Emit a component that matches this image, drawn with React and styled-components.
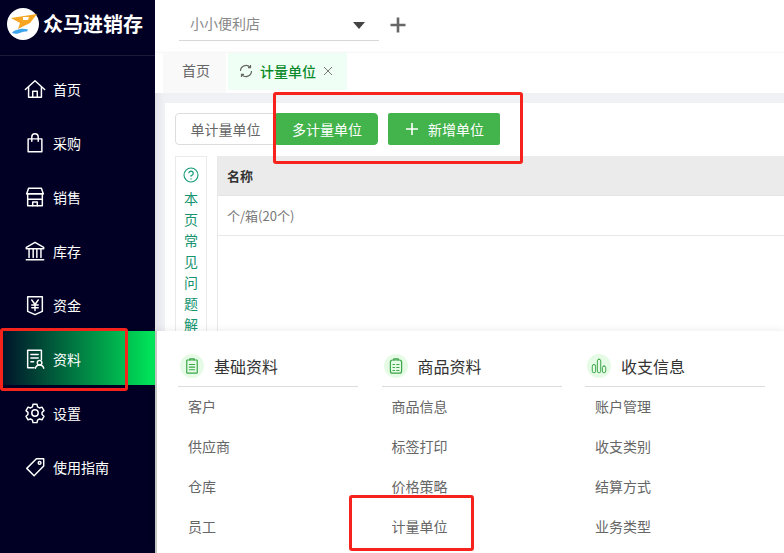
import styled, { createGlobalStyle } from 'styled-components'

const GlobalStyle = createGlobalStyle`
  html, body { margin: 0; padding: 0; height: 100%; overflow: hidden; }
  #root { height: 100%; }
  body { font-family: "Noto Sans CJK SC", "Liberation Sans", sans-serif; background: #fff; }
  * { box-sizing: border-box; }
`

const Line = ({ children, size = 24, sw = 1.6 }) => (
  <svg width={size} height={size} viewBox="0 0 24 24" fill="none" stroke="currentColor" strokeWidth={sw} strokeLinejoin="round" strokeLinecap="round">
    {children}
  </svg>
)

const navItems = [
  { label: '首页', icon: <Line><path d="M1.500 12.500 12 3l10.500 9.500" /><path d="M5 10V21h14V10" /><path d="M9.500 21v-6.500h5V21" /></Line> },
  { label: '采购', icon: <Line><rect x="4.500" y="7.500" width="15" height="14" /><path d="M8.500 10V5.500a3.500 3.500 0 0 1 7 0V10" /></Line> },
  { label: '销售', icon: <Line><path d="M5 2.500h14l2 6H3z" /><path d="M3 8.500h18M4 9v12.500h16V9" /><path d="M4 14.500h16M9.500 21.500v-4h5v4" /></Line> },
  { label: '库存', icon: <Line><path d="M12 2.500 21.500 8v1.500h-19V8z" /><path d="M5.500 10v9M10 10v9M14 10v9M18.500 10v9" /><path d="M2.500 21.500h19" /></Line> },
  { label: '资金', icon: <Line><path d="M4 3h16v16l-8 3.500L4 19z" /><path d="m8.500 6.500 3.500 5 3.500-5M12 11.500V18M8.500 12h7M8.500 15h7" /></Line> },
  { label: '资料', active: true, icon: <Line><path d="M11 21.500H4V2.500h15v10" /><path d="M7.500 7h8M7.500 11h8M7.500 15h3" /><circle cx="17" cy="16" r="2.500" /><path d="M12.500 22c.5-2.500 2-3.500 4.500-3.500s4 1 4.500 3.500" /></Line> },
  { label: '设置', icon: <Line><path d="M9.800 2.500h4.400l.6 2.800 2.100 1.200 2.700-.9 2.200 3.800-2.100 1.900v2.400l2.100 1.900-2.200 3.800-2.700-.9-2.100 1.200-.6 2.800H9.800l-.6-2.800-2.100-1.200-2.700.9-2.200-3.800 2.100-1.900v-2.400L2.200 9.400l2.200-3.800 2.700.9 2.100-1.200z" /><circle cx="12" cy="12" r="3.500" /></Line> },
  { label: '使用指南', icon: <Line><path d="M13.500 3H21.500V11L11 21.500 3 13.500z" /><circle cx="17" cy="7.500" r="1.500" /></Line> },
]

const helpChars = ['本', '页', '常', '见', '问', '题', '解', '决']

const menuGroups = [
  {
    title: '基础资料',
    items: ['客户', '供应商', '仓库', '员工'],
    icon: <Line size={18}><rect x="5" y="4" width="14" height="17.500" rx="1" /><path d="M9 4V2.500h6V4M8.500 10h7M8.500 13.500h7M8.500 17h7" /></Line>,
  },
  {
    title: '商品资料',
    items: ['商品信息', '标签打印', '价格策略', '计量单位'],
    icon: <Line size={18}><rect x="4.500" y="4" width="15" height="17.500" rx="3" /><path d="M9 4V2.500h6V4M8 10h2M13 10h3M8 14h2M13 14h3M8 18h2M13 18h3" /></Line>,
  },
  {
    title: '收支信息',
    items: ['账户管理', '收支类别', '结算方式', '业务类型'],
    icon: <Line size={18} sw={1.300}><rect x="3" y="10" width="4.500" height="11" rx="2.200" /><rect x="9.800" y="3" width="4.500" height="18" rx="2.200" /><rect x="16.500" y="12" width="4.500" height="9" rx="2.200" /></Line>,
  },
]

const App = () => {
  return (
    <Page>
      <GlobalStyle />
      <Sidebar>
        <Brand>
          <Logo viewBox="0 0 32 32">
            <circle cx="16" cy="16" r="16" fill="#fff" />
            <path d="M4 10 30 6 23 15 11 21 13 15z" fill="#f6a623" />
            <path d="M16 9h6l-1 3h-5z" fill="#fff" />
            <path d="M5 25c2-3 5-3 8-4 2-.5 5-.5 8 .5l-1 2c-3 0-4 0-6 1s-5 2-9 .5z" fill="#3ba4ea" />
          </Logo>
          <BrandName>众马进销存</BrandName>
        </Brand>
        <Nav>
          {navItems.map((item) => (
            <NavItem key={item.label} $active={item.active}>
              <NavIcon>{item.icon}</NavIcon>
              <span>{item.label}</span>
            </NavItem>
          ))}
        </Nav>
      </Sidebar>

      <Main>
        <TopBar>
          <ShopSelect>
            <span>小小便利店</span>
            <Caret />
          </ShopSelect>
          <AddShop>
            <svg width="18" height="18" viewBox="0 0 18 18"><path d="M9 1.500v15M1.500 9h15" stroke="#666" strokeWidth="2.600" /></svg>
          </AddShop>
        </TopBar>

        <Tabs>
          <HomeTab>首页</HomeTab>
          <ActiveTab>
            <svg width="14" height="14" viewBox="0 0 14 14" fill="none" stroke="#666" strokeWidth="1.200">
              <path d="M1.500 7A5.500 5.500 0 0 1 11 3.200M12.500 7A5.500 5.500 0 0 1 3 10.800" />
              <path d="M11.500 1v2.600H9M2.500 13v-2.600H5" />
            </svg>
            <TabLabel>计量单位</TabLabel>
            <svg width="10" height="10" viewBox="0 0 10 10"><path d="m1 1 8 8M9 1 1 9" stroke="#777" strokeWidth="1" /></svg>
          </ActiveTab>
        </Tabs>

        <Content>
          <Card>
            <Toolbar>
              <SegmentGroup>
                <Segment>单计量单位</Segment>
                <Segment $selected>多计量单位</Segment>
              </SegmentGroup>
              <AddButton>
                <svg width="12" height="12" viewBox="0 0 12 12"><path d="M6 0v12M0 6h12" stroke="#fff" strokeWidth="1.600" /></svg>
                新增单位
              </AddButton>
            </Toolbar>
            <Body>
              <HelpColumn>
                <HelpIcon width="16" height="16" viewBox="0 0 16 16" fill="none" stroke="#159a76" strokeWidth="1.100">
                  <circle cx="8" cy="8" r="7" />
                  <path d="M5.800 6.300A2.200 2.200 0 1 1 8 8.500v1.300M8 11.200v1.200" />
                </HelpIcon>
                {helpChars.map((c) => <HelpChar key={c}>{c}</HelpChar>)}
              </HelpColumn>
              <Table>
                <HeadRow>名称</HeadRow>
                <Row>个/箱(20个)</Row>
              </Table>
            </Body>
          </Card>
        </Content>
      </Main>

      <MegaMenu>
        {menuGroups.map((group) => (
          <MenuColumn key={group.title}>
            <MenuHead>
              <MenuIcon>{group.icon}</MenuIcon>
              <span>{group.title}</span>
            </MenuHead>
            {group.items.map((label) => <MenuLink key={label}>{label}</MenuLink>)}
          </MenuColumn>
        ))}
      </MegaMenu>

      <Callout $left={0} $top={328} $width={128} $height={63} />
      <Callout $left={273} $top={92} $width={250} $height={72} />
      <Callout $left={349} $top={495} $width={125} $height={56} />
    </Page>
  )
}

export default App

const Page = styled.div`
  position: relative;
  display: flex;
  width: 784px;
  height: 553px;
  overflow: hidden;
`

const Sidebar = styled.aside`
  flex: 0 0 155px;
  background: #010024;
  color: #fff;
`

const Brand = styled.div`
  display: flex;
  align-items: center;
  gap: 4px;
  height: 56px;
  padding: 0 0 8px 7px;
  border-bottom: 1px solid #1c1b3a;
`

const Logo = styled.svg`
  width: 32px;
  height: 32px;
  flex: none;
`

const BrandName = styled.div`
  font-size: 20px;
  font-weight: 700;
  line-height: 28px;
  white-space: nowrap;
`

const Nav = styled.nav`
  padding-top: 5px;
`

const NavItem = styled.div`
  display: flex;
  align-items: center;
  height: 54px;
  padding: 2px 0 0 24px;
  gap: 7px;
  font-size: 14px;
  background: ${(p) => (p.$active ? 'linear-gradient(90deg, #01102a 0%, #00e85a 100%)' : 'transparent')};
`

const NavIcon = styled.span`
  display: flex;
  width: 22px;
  justify-content: center;
`

const Main = styled.main`
  flex: 1;
  min-width: 0;
  display: flex;
  flex-direction: column;
  background: #f0f1f5;
  box-shadow: inset 8px 0 6px -4px #dfe0e6;
`

const TopBar = styled.header`
  display: flex;
  align-items: flex-start;
  height: 53px;
  padding: 5px 0 0 24px;
  background: linear-gradient(#fff 96%, #f5f5f5);
`

const ShopSelect = styled.div`
  display: flex;
  justify-content: space-between;
  align-items: center;
  width: 200px;
  height: 36px;
  padding: 0 14px 0 11px;
  border-bottom: 1px solid #d8d8d8;
  color: #888;
  font-size: 14px;
`

const Caret = styled.i`
  width: 0;
  height: 0;
  margin-top: 6px;
  border-left: 6px solid transparent;
  border-right: 6px solid transparent;
  border-top: 7px solid #444;
`

const AddShop = styled.div`
  display: flex;
  margin: 11px 0 0 10px;
`

const Tabs = styled.div`
  display: flex;
  gap: 2px;
  height: 40px;
  padding-left: 8px;
  background: #fff;
`

const HomeTab = styled.div`
  display: flex;
  align-items: center;
  justify-content: center;
  width: 63px;
  height: 40px;
  padding: 0 0 6px 3px;
  background: #f9f9f9;
  color: #666;
  font-size: 14px;
`

const ActiveTab = styled.div`
  display: flex;
  align-items: center;
  gap: 7px;
  width: 119px;
  height: 37px;
  padding: 0 0 1px 11px;
  background: #effff5;
`

const TabLabel = styled.span`
  color: #0a8a2a;
  font-size: 14px;
  font-weight: 500;
`

const Content = styled.div`
  flex: 1;
  padding: 10px 0 0 10px;
  min-height: 0;
`

const Card = styled.section`
  height: 100%;
  padding: 10px 0 0 10px;
  background: #fff;
`

const Toolbar = styled.div`
  display: flex;
  align-items: center;
  gap: 10px;
  height: 32px;
`

const SegmentGroup = styled.div`
  display: flex;
`

const Segment = styled.div`
  display: flex;
  align-items: center;
  justify-content: center;
  width: ${(p) => (p.$selected ? '102px' : '101px')};
  height: 32px;
  border: 1px solid ${(p) => (p.$selected ? '#43b34b' : '#ddd')};
  border-radius: ${(p) => (p.$selected ? '0 4px 4px 0' : '4px 0 0 4px')};
  background: ${(p) => (p.$selected ? '#43b34b' : '#fff')};
  color: ${(p) => (p.$selected ? '#fff' : '#666')};
  font-size: 14px;
`

const AddButton = styled.div`
  display: flex;
  align-items: center;
  gap: 10px;
  width: 112px;
  height: 32px;
  padding-left: 18px;
  border-radius: 2px;
  background: #43b34b;
  color: #fff;
  font-size: 14px;
`

const Body = styled.div`
  display: flex;
  gap: 10px;
  margin-top: 11px;
`

const HelpColumn = styled.div`
  display: flex;
  flex-direction: column;
  align-items: center;
  flex: 0 0 32px;
  height: 200px;
  padding-top: 10px;
  border: 1px solid #eaeaea;
`

const HelpIcon = styled.svg`
  flex: none;
  margin-bottom: 5px;
`

const HelpChar = styled.span`
  flex: none;
  width: 21px;
  height: 21px;
  color: #15946f;
  font-size: 14px;
  line-height: 21px;
  text-align: center;
`

const Table = styled.div`
  flex: 1;
  height: 200px;
  border-left: 1px solid #e8e8e8;
`

const HeadRow = styled.div`
  display: flex;
  align-items: center;
  height: 40px;
  padding-left: 9px;
  background: #ebebeb;
  border-bottom: 1px solid #e4e4e4;
  color: #333;
  font-size: 13px;
  font-weight: 700;
`

const Row = styled.div`
  display: flex;
  align-items: center;
  height: 40px;
  padding-left: 9px;
  border-bottom: 1px solid #e8e8e8;
  color: #777;
  font-size: 13px;
`

const MegaMenu = styled.div`
  position: absolute;
  left: 155px;
  top: 331px;
  right: 0;
  bottom: 0;
  display: flex;
  gap: 23.5px;
  padding: 0 0 0 21px;
  background: #fff;
  border-left: 2px solid #c4c7c4;
  box-shadow: 0 -2px 6px rgba(0, 0, 0, 0.06);
`

const MenuColumn = styled.div`
  flex: 0 0 180px;
`

const MenuHead = styled.div`
  display: flex;
  align-items: center;
  gap: 10px;
  height: 56px;
  padding: 14px 0 0 2px;
  border-bottom: 1px solid #dcdcdc;
  color: #333;
  font-size: 16px;
`

const MenuIcon = styled.span`
  display: flex;
  align-items: center;
  justify-content: center;
  width: 24px;
  height: 24px;
  border-radius: 50%;
  background: #e6fbe6;
  color: #3aa648;
`

const MenuLink = styled.div`
  display: flex;
  align-items: center;
  height: 40px;
  padding: 0 0 2px 10px;
  color: #666;
  font-size: 14px;
`

const Callout = styled.div`
  position: absolute;
  left: ${(p) => p.$left}px;
  top: ${(p) => p.$top}px;
  width: ${(p) => p.$width}px;
  height: ${(p) => p.$height}px;
  border: 3px solid #f5231b;
  border-radius: 3px;
`
